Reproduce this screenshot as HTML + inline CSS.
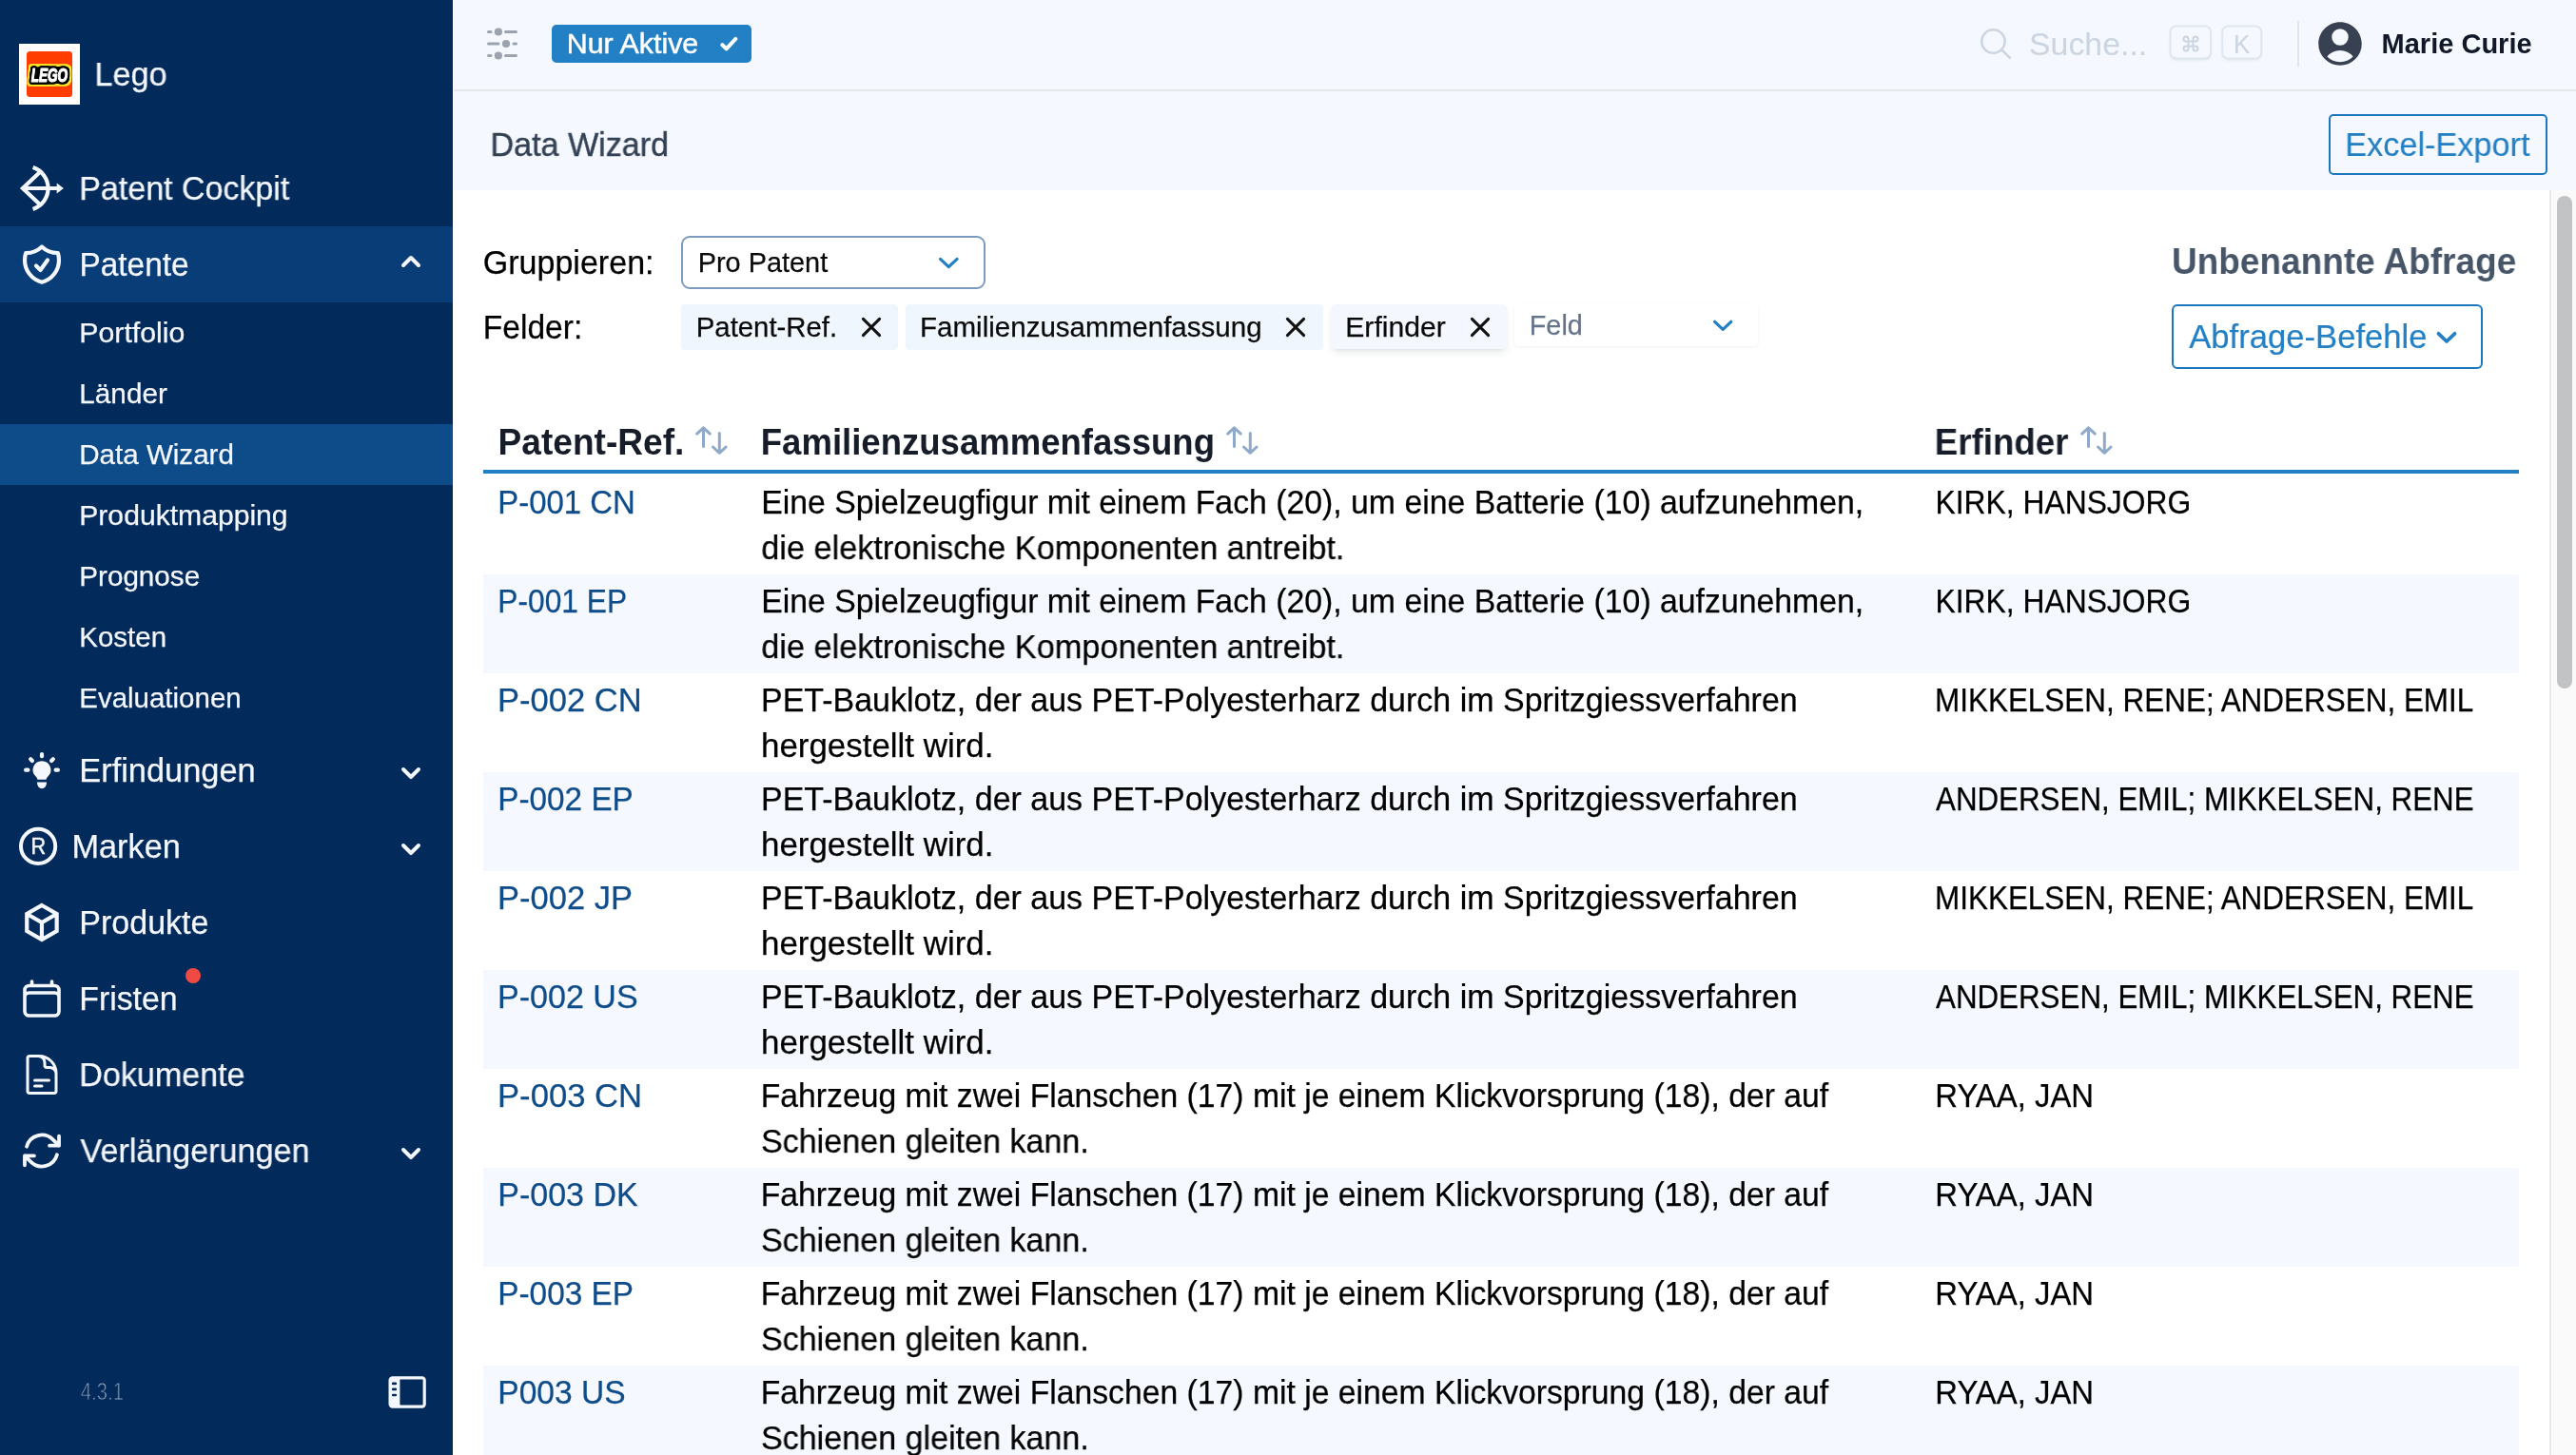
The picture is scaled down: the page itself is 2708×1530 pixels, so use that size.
<!DOCTYPE html>
<html lang="de"><head><meta charset="utf-8"><title>Data Wizard</title>
<style>
html,body{margin:0;padding:0;}
body{width:2708px;height:1530px;overflow:hidden;position:relative;background:#fff;font-family:"Liberation Sans",sans-serif;}
.abs{position:absolute;}
.tl{position:absolute;left:0;top:0;will-change:transform;}
.t{position:absolute;white-space:pre;transform-origin:0 0;font-family:"Liberation Sans",sans-serif;font-kerning:normal;}
svg{overflow:visible;}
</style></head><body>
<nav aria-label="Hauptnavigation">
<div class="abs" style="left:0;top:0;width:476px;height:1530px;background:#022a5a"></div>
<div class="abs" style="left:0;top:238px;width:476px;height:80px;background:#093d78"></div>
<div class="abs" style="left:0;top:446px;width:476px;height:64px;background:#0e4c89"></div>
<div class="abs" style="left:20px;top:46px;width:64px;height:64px;background:#fdfdfd"></div>
<svg class="abs" style="left:28px;top:54px" width="48" height="48" viewBox="0 0 48 48">
<defs><filter id="lg" x="-20%" y="-50%" width="140%" height="200%" color-interpolation-filters="sRGB">
<feMorphology in="SourceAlpha" operator="dilate" radius="2" result="d1"/><feGaussianBlur in="d1" stdDeviation="0.9" result="b1"/>
<feComponentTransfer in="b1" result="t1"><feFuncA type="linear" slope="6" intercept="-2.2"/></feComponentTransfer>
<feFlood flood-color="#000"/><feComposite in2="t1" operator="in" result="black"/>
<feMorphology in="SourceAlpha" operator="dilate" radius="4" result="d2"/><feGaussianBlur in="d2" stdDeviation="0.9" result="b2"/>
<feComponentTransfer in="b2" result="t2"><feFuncA type="linear" slope="6" intercept="-2.2"/></feComponentTransfer>
<feFlood flood-color="#ffe42a"/><feComposite in2="t2" operator="in" result="yellow"/>
<feMerge><feMergeNode in="yellow"/><feMergeNode in="black"/><feMergeNode in="SourceGraphic"/></feMerge></filter></defs>
<rect x="0" y="0" width="48" height="48" rx="3.5" fill="#ff3d00"/>
<clipPath id="lc"><rect x="0" y="0" width="48" height="48" rx="3.5"/></clipPath><g clip-path="url(#lc)"><g filter="url(#lg)"><text font-family="Liberation Sans" font-weight="bold" font-style="italic" font-size="20.500" text-anchor="middle" x="23.900" y="31.500" fill="#fff" stroke="#fff" stroke-width="1.200" stroke-linejoin="round" textLength="38.5" lengthAdjust="spacingAndGlyphs">LEGO</text></g></g>
</svg>

<svg class="abs" style="left:16px;top:170px" width="56" height="56" viewBox="16 170 56 56" fill="none" stroke="#f4f7fd" stroke-width="4.2" stroke-linecap="butt" stroke-linejoin="miter">
<path d="M34.6 176.1 A23 23 0 0 1 34.6 219.900"/>
<path d="M43 180 L23.9 198 L43 216"/>
<path d="M23.8 198 H61"/>
<path d="M59.7 192.600 L66.9 198 L59.7 203.400 Z" fill="#f4f7fd" stroke="none"/>
</svg>

<svg class="abs" style="left:20px;top:254px" width="48" height="48" viewBox="0 0 24 24" fill="none" stroke="#f4f7fd" stroke-width="2.1" stroke-linecap="round" stroke-linejoin="round"><path d="M9 12.750 11.250 15 15 9.750m-3-7.036A11.959 11.959 0 0 1 3.598 6 11.990 11.990 0 0 0 3 9.749c0 5.592 3.824 10.290 9 11.623 5.176-1.332 9-6.030 9-11.622 0-1.310-.210-2.571-.598-3.751h-.152c-3.196 0-6.100-1.248-8.250-3.285Z"/></svg>

<svg class="abs" style="left:416px;top:262px" width="32" height="26" viewBox="416 262 32 26" fill="none" stroke="#f4f7fd" stroke-width="4" stroke-linecap="round" stroke-linejoin="round"><path d="M424 279 L432 271 L440 279"/></svg>







<svg class="abs" style="left:20px;top:786px" width="48" height="48" viewBox="20 786 48 48" fill="#f4f7fd" stroke="none">
<path d="M44 800.2 a9.4 9.4 0 0 1 6.200 16.500 c-1.100 1 -1.500 2 -1.600 3.100 h-9.200 c-.1 -1.100 -.5 -2.100 -1.600 -3.100 a9.400 9.400 0 0 1 6.200 -16.500z"/>
<path d="M38.900 822.400 h10.200 a5.100 5.100 0 0 1 -10.200 0z" transform="translate(0,0) scale(1,1.350) translate(0,-213.200)"/>
<g stroke="#f4f7fd" stroke-width="4.2" stroke-linecap="round" fill="none">
<path d="M44 793 v2.300"/><path d="M27.100 809.700 h2.300"/><path d="M58.600 809.700 h2.300"/>
<path d="M32.200 798.200 l1.700 1.700"/><path d="M55.800 798.200 l-1.700 1.700"/>
</g></svg>

<svg class="abs" style="left:416px;top:800px" width="32" height="26" viewBox="416 800 32 26" fill="none" stroke="#f4f7fd" stroke-width="4" stroke-linecap="round" stroke-linejoin="round"><path d="M424 809 L432 817 L440 809"/></svg>
<svg class="abs" style="left:18px;top:868px" width="44" height="44" viewBox="18 868 44 44" fill="none" stroke="#f4f7fd" stroke-width="4"><circle cx="40.1" cy="889.900" r="18.100"/></svg>


<svg class="abs" style="left:416px;top:880px" width="32" height="26" viewBox="416 880 32 26" fill="none" stroke="#f4f7fd" stroke-width="4" stroke-linecap="round" stroke-linejoin="round"><path d="M424 889 L432 897 L440 889"/></svg>
<svg class="abs" style="left:20px;top:946px" width="48" height="48" viewBox="20 946 48 48" fill="none" stroke="#f4f7fd" stroke-width="4.2" stroke-linejoin="miter" stroke-linecap="butt"><path d="M43.95 951.95 L59.65 961 V979.1 L43.95 988.15 L28.25 979.1 V961 Z M28.25 961 L43.95 970.05 L59.65 961 M43.95 970.05 V988.15"/></svg>

<svg class="abs" style="left:20px;top:1026px" width="48" height="48" viewBox="0 0 24 24" fill="none" stroke="#f4f7fd" stroke-width="1.8" stroke-linecap="round" stroke-linejoin="round"><path d="M6.750 3v2.250M17.250 3v2.250M3 18.750V7.500a2.250 2.250 0 0 1 2.250-2.250h13.500A2.250 2.250 0 0 1 21 7.500v11.250m-18 0A2.250 2.250 0 0 0 5.250 21h13.500A2.250 2.250 0 0 0 21 18.750m-18 0v-7.500A2.250 2.250 0 0 1 5.250 9h13.500A2.250 2.250 0 0 1 21 11.250v7.500"/></svg>

<div class="abs" style="left:195px;top:1018px;width:16px;height:16px;border-radius:8px;background:#ef4a44"></div>
<svg class="abs" style="left:20px;top:1106px" width="48" height="48" viewBox="0 0 24 24" fill="none" stroke="#f4f7fd" stroke-width="1.5" stroke-linecap="round" stroke-linejoin="round"><path d="M19.500 14.250v-2.625a3.375 3.375 0 0 0-3.375-3.375h-1.500A1.125 1.125 0 0 1 13.500 7.125v-1.500a3.375 3.375 0 0 0-3.375-3.375H8.250m0 12.750h7.500m-7.500 3H12M10.500 2.250H5.625c-.621 0-1.125.504-1.125 1.125v17.250c0 .621.504 1.125 1.125 1.125h12.750c.621 0 1.125-.504 1.125-1.125V11.250a9 9 0 0 0-9-9Z"/></svg>

<svg class="abs" style="left:20px;top:1186px" width="48" height="48" viewBox="0 0 24 24" fill="none" stroke="#f4f7fd" stroke-width="1.9" stroke-linecap="round" stroke-linejoin="round"><path d="M16.023 9.348h4.992v-.001M2.985 19.644v-4.992m0 0h4.992m-4.993 0 3.181 3.183a8.250 8.250 0 0 0 13.803-3.700M4.031 9.865a8.250 8.250 0 0 1 13.803-3.700l3.181 3.182m0-4.991v4.990"/></svg>

<svg class="abs" style="left:416px;top:1200px" width="32" height="26" viewBox="416 1200 32 26" fill="none" stroke="#f4f7fd" stroke-width="4" stroke-linecap="round" stroke-linejoin="round"><path d="M424 1209 L432 1217 L440 1209"/></svg>

<svg class="abs" style="left:406px;top:1444px" width="44" height="40" viewBox="406 1444 44 40">
<rect x="408.5" y="1447.2" width="39.3" height="33.500" rx="4.200" fill="#f4f7fd"/>
<rect x="420.4" y="1450.4" width="24.200" height="27.100" rx="0.800" fill="#022a5a"/>
<g stroke="#022a5a" stroke-width="2.700" stroke-linecap="round"><path d="M413.200 1454.900h2.600"/><path d="M413.200 1460.900h2.600"/><path d="M413.200 1467h2.600"/></g>
</svg>
<div class="tl"><span class="t" style="left:99px;top:57px;font-size:34.6px;line-height:43px;color:#f4f7fd;transform:translateX(0.50px) scaleX(0.9878);-webkit-text-stroke:0.25px #f4f7fd;">Lego</span>
<span class="t" style="left:83px;top:177px;font-size:34.6px;line-height:43px;color:#f4f7fd;transform:translateX(0.25px) scaleX(0.9833);-webkit-text-stroke:0.25px #f4f7fd;">Patent Cockpit</span>
<span class="t" style="left:83px;top:257px;font-size:34.6px;line-height:43px;color:#f4f7fd;transform:translateX(0.50px) scaleX(0.9656);-webkit-text-stroke:0.25px #f4f7fd;">Patente</span>
<span class="t" style="left:83px;top:331px;font-size:30.2px;line-height:38px;color:#f4f7fd;transform:translateX(0.25px) scaleX(1.0036);-webkit-text-stroke:0.25px #f4f7fd;">Portfolio</span>
<span class="t" style="left:83px;top:395px;font-size:30.2px;line-height:38px;color:#f4f7fd;transform:translateX(0.25px) scaleX(0.9856);-webkit-text-stroke:0.25px #f4f7fd;">Länder</span>
<span class="t" style="left:83px;top:459px;font-size:30.2px;line-height:38px;color:#f4f7fd;transform:translateX(0.25px) scaleX(0.9791);-webkit-text-stroke:0.25px #f4f7fd;">Data Wizard</span>
<span class="t" style="left:83px;top:523px;font-size:30.2px;line-height:38px;color:#f4f7fd;transform:translateX(0.25px) scaleX(0.9979);-webkit-text-stroke:0.25px #f4f7fd;">Produktmapping</span>
<span class="t" style="left:83px;top:587px;font-size:30.2px;line-height:38px;color:#f4f7fd;transform:translateX(0.25px) scaleX(0.9821);-webkit-text-stroke:0.25px #f4f7fd;">Prognose</span>
<span class="t" style="left:83px;top:651px;font-size:30.2px;line-height:38px;color:#f4f7fd;transform:translateX(0.25px) scaleX(0.9769);-webkit-text-stroke:0.25px #f4f7fd;">Kosten</span>
<span class="t" style="left:83px;top:715px;font-size:30.2px;line-height:38px;color:#f4f7fd;transform:translateX(0.25px) scaleX(0.9763);-webkit-text-stroke:0.25px #f4f7fd;">Evaluationen</span>
<span class="t" style="left:83px;top:789px;font-size:34.6px;line-height:43px;color:#f4f7fd;transform:translateX(0.25px) scaleX(0.9943);-webkit-text-stroke:0.25px #f4f7fd;">Erfindungen</span>
<span class="t" style="left:32px;top:874px;font-size:24.8px;line-height:31px;color:#f4f7fd;transform:translateX(0.50px) scaleX(0.8700);-webkit-text-stroke:0.5px #f4f7fd;">R</span>
<span class="t" style="left:75px;top:869px;font-size:34.6px;line-height:43px;color:#f4f7fd;transform:translateX(0.50px) scaleX(0.9910);-webkit-text-stroke:0.25px #f4f7fd;">Marken</span>
<span class="t" style="left:83px;top:949px;font-size:34.6px;line-height:43px;color:#f4f7fd;transform:translateX(0.25px) scaleX(0.9843);-webkit-text-stroke:0.25px #f4f7fd;">Produkte</span>
<span class="t" style="left:83px;top:1029px;font-size:34.6px;line-height:43px;color:#f4f7fd;transform:translateX(0.25px) scaleX(0.9773);-webkit-text-stroke:0.25px #f4f7fd;">Fristen</span>
<span class="t" style="left:83px;top:1109px;font-size:34.6px;line-height:43px;color:#f4f7fd;transform:translateX(0.25px) scaleX(0.9857);-webkit-text-stroke:0.25px #f4f7fd;">Dokumente</span>
<span class="t" style="left:84px;top:1189px;font-size:34.6px;line-height:43px;color:#f4f7fd;transform:translateX(0.50px) scaleX(0.9869);-webkit-text-stroke:0.25px #f4f7fd;">Verlängerungen</span>
<span class="t" style="left:84px;top:1447px;font-size:25.5px;line-height:32px;color:#9aaac2;transform:translateX(0.75px) scaleX(0.7968);-webkit-text-stroke:0.9px #022a5a;">4.3.1</span></div>
</nav>
<header>
<div class="abs" style="left:476px;top:0;width:2232px;height:200px;background:#f5f8fe"></div>
<div class="abs" style="left:477px;top:94px;width:2231px;height:2px;background:#e4e6ea"></div>
<div class="abs" style="left:476px;top:0;width:1px;height:200px;background:#fff"></div>
<svg class="abs" style="left:508px;top:24px" width="40" height="44" viewBox="508 24 40 44" fill="#9ca3af" stroke="#9ca3af" stroke-width="3" stroke-linecap="round">
<path d="M513.500 33.500h2.500M531.500 33.500h11M513.500 46h10.500M540 46h2.500M513.500 58.500h2.500M531.500 58.500h11"/>
<g stroke="none"><circle cx="523.900" cy="33.500" r="4.100"/><circle cx="532" cy="46" r="4.100"/><circle cx="523.900" cy="58.500" r="4.100"/></g></svg>
<div class="abs" style="left:580px;top:26px;width:210px;height:40px;border-radius:5px;background:#2380c4"></div>

<svg class="abs" style="left:752px;top:34px" width="28" height="24" viewBox="752 34 28 24" fill="none" stroke="#fff" stroke-width="4" stroke-linecap="round" stroke-linejoin="round"><path d="M759.400 47.200 L763.600 51.300 L773.300 40.900"/></svg>
<svg class="abs" style="left:2078px;top:26px" width="40" height="40" viewBox="2078 26 40 40" fill="none" stroke="#cbd5e1" stroke-width="2.500" stroke-linecap="round"><circle cx="2095.400" cy="43.500" r="12.200"/><path d="M2104.300 52.300 L2112.900 60.800"/></svg>

<svg class="abs" style="left:2270px;top:20px" width="120" height="54" viewBox="2270 20 120 54"><defs><filter id="ks2280" x="-20%" y="-20%" width="140%" height="160%"><feGaussianBlur stdDeviation="1.5"/></filter></defs><rect x="2281.5" y="29.5" width="42.5" height="34" rx="6" fill="#64748b" opacity="0.13" filter="url(#ks2280)"/><rect x="2281.5" y="27.5" width="42.5" height="34" rx="6" fill="#f5f8fe" stroke="#e0e6ee" stroke-width="2"/></svg>
<svg class="abs" style="left:2270px;top:20px" width="120" height="54" viewBox="2270 20 120 54"><defs><filter id="ks2335" x="-20%" y="-20%" width="140%" height="160%"><feGaussianBlur stdDeviation="1.5"/></filter></defs><rect x="2336.2" y="29.5" width="41.0" height="34" rx="6" fill="#64748b" opacity="0.13" filter="url(#ks2335)"/><rect x="2336.2" y="27.5" width="41.0" height="34" rx="6" fill="#f5f8fe" stroke="#e0e6ee" stroke-width="2"/></svg>
<svg class="abs" style="left:2292.500px;top:35.700px" width="20" height="20" viewBox="0 0 24 24" fill="none" stroke="#cbd5e1" stroke-width="2.400" stroke-linecap="round" stroke-linejoin="round"><path d="M18 3a3 3 0 0 0-3 3v12a3 3 0 0 0 3 3 3 3 0 0 0 3-3 3 3 0 0 0-3-3H6a3 3 0 0 0-3 3 3 3 0 0 0 3 3 3 3 0 0 0 3-3V6a3 3 0 0 0-3-3 3 3 0 0 0-3 3 3 3 0 0 0 3 3h12a3 3 0 0 0 3-3 3 3 0 0 0-3-3z"/></svg>

<div class="abs" style="left:2415px;top:22px;width:2px;height:48px;background:#e3e7ed"></div>
<svg class="abs" style="left:2432px;top:18px" width="56" height="56" viewBox="0 0 24 24" fill="#374151"><path fill-rule="evenodd" clip-rule="evenodd" d="M18.685 19.097A9.723 9.723 0 0 0 21.750 12c0-5.385-4.365-9.750-9.750-9.750S2.250 6.615 2.250 12a9.723 9.723 0 0 0 3.065 7.097A9.716 9.716 0 0 0 12 21.750a9.716 9.716 0 0 0 6.685-2.653Zm-12.540-1.285A7.486 7.486 0 0 1 12 15a7.486 7.486 0 0 1 5.855 2.812A8.224 8.224 0 0 1 12 20.250a8.224 8.224 0 0 1-5.855-2.438ZM15.750 9a3.750 3.750 0 1 1-7.500 0 3.750 3.750 0 0 1 7.500 0Z"/></svg>


<div class="abs" style="left:2448px;top:120px;width:230px;height:64px;border-radius:5px;border:2px solid #1d77bd;box-sizing:border-box"></div>

<div class="tl"><span class="t" style="left:595px;top:27px;font-size:29.6px;line-height:37px;color:#fff;transform:translateX(0.75px) scaleX(1.0268);-webkit-text-stroke:0.45px #fff;">Nur Aktive</span>
<span class="t" style="left:2133px;top:25px;font-size:33.8px;line-height:42px;color:#cbd5e1;transform:translateX(0.00px) scaleX(1.0016);-webkit-text-stroke:0.1px #cbd5e1;">Suche...</span>
<span class="t" style="left:2347px;top:29px;font-size:27.9px;line-height:35px;color:#cbd5e1;transform:translateX(1.00px) scaleX(0.9356);-webkit-text-stroke:0.1px #cbd5e1;">K</span>
<span class="t" style="left:2503px;top:27px;font-size:29.6px;line-height:37px;color:#111827;transform:translateX(0.50px) scaleX(0.9811);font-weight:700;">Marie Curie</span>
<span class="t" style="left:515px;top:131px;font-size:34.6px;line-height:43px;color:#334155;transform:translateX(0.50px) scaleX(0.9859);-webkit-text-stroke:0.4px #334155;">Data Wizard</span>
<span class="t" style="left:2465px;top:131px;font-size:34.5px;line-height:43px;color:#2380c4;transform:translateX(0.25px) scaleX(0.9935);-webkit-text-stroke:0.15px #2380c4;">Excel-Export</span></div>
</header>
<main>
<div class="abs" style="left:476px;top:200px;width:2204px;height:1330px;background:#fff"></div>
<div class="abs" style="left:2680px;top:200px;width:28px;height:1330px;background:#fafafa;border-left:2px solid #e8e9ed;box-sizing:border-box"></div>
<div class="abs" style="left:2688px;top:206px;width:16px;height:518px;border-radius:8px;background:#c2c3c5"></div>

<div class="abs" style="left:716px;top:248px;width:320px;height:56px;border-radius:9px;border:2px solid #7b9abf;box-sizing:border-box;background:#fff"></div>

<svg class="abs" style="left:980px;top:262px" width="34" height="28" viewBox="980 262 34 28" fill="none" stroke="#2380c4" stroke-width="3.200" stroke-linecap="round" stroke-linejoin="round"><path d="M988.500 272.400 L997.300 280.600 L1006.100 272.400"/></svg>

<div class="abs" style="left:716px;top:320px;width:228px;height:48px;border-radius:4px;background:#f0f6fe"></div>

<svg class="abs" style="left:902px;top:330px" width="28" height="28" viewBox="902 330 28 28" fill="none" stroke="#111" stroke-width="3" stroke-linecap="round"><path d="M907.4 335.4 L924.6 352.6 M924.6 335.4 L907.4 352.6"/></svg>
<div class="abs" style="left:952px;top:320px;width:439px;height:48px;border-radius:4px;background:#f0f6fe"></div>

<svg class="abs" style="left:1348px;top:330px" width="28" height="28" viewBox="1348 330 28 28" fill="none" stroke="#111" stroke-width="3" stroke-linecap="round"><path d="M1353.4 335.4 L1370.6 352.6 M1370.6 335.4 L1353.4 352.6"/></svg>
<div class="abs" style="left:1399px;top:320px;width:185px;height:47px;border-radius:5px;background:#f4f7fd;box-shadow:0 5px 9px -2px rgba(30,41,59,0.11),0 2px 4px -2px rgba(30,41,59,0.08)"></div>

<svg class="abs" style="left:1542px;top:330px" width="28" height="28" viewBox="1542 330 28 28" fill="none" stroke="#111" stroke-width="3" stroke-linecap="round"><path d="M1547.4 335.4 L1564.6 352.6 M1564.6 335.4 L1547.4 352.6"/></svg>
<div class="abs" style="left:1592px;top:320px;width:256px;height:44px;border-radius:4px;background:#fff;box-shadow:0 1px 3px rgba(100,116,139,0.10)"></div>

<svg class="abs" style="left:1794px;top:328px" width="34" height="28" viewBox="1794 328 34 28" fill="none" stroke="#2380c4" stroke-width="3.200" stroke-linecap="round" stroke-linejoin="round"><path d="M1802.600 338.300 L1811.200 346.300 L1819.800 338.300"/></svg>

<div class="abs" style="left:2283px;top:320px;width:327px;height:68px;border-radius:6px;border:2px solid #1d77bd;box-sizing:border-box"></div>

<svg class="abs" style="left:2556px;top:340px" width="34" height="30" viewBox="2556 340 34 30" fill="none" stroke="#2380c4" stroke-width="3.800" stroke-linecap="round" stroke-linejoin="round"><path d="M2563.500 350.800 L2572 359 L2580.500 350.800"/></svg>

<svg class="abs" style="left:727.2px;top:444px" width="44" height="40" viewBox="727.2 444 44 40" fill="none" stroke="#8fa9c9" stroke-width="3" stroke-linecap="round" stroke-linejoin="round"><path d="M739.7 469.400 V449.800 M732.9000000000001 456.100 L739.7 449.800 L746.5 456.100 M756.5 455.500 V476.300 M749.7 470 L756.5 476.300 L763.3 470"/></svg>

<svg class="abs" style="left:1285.1px;top:444px" width="44" height="40" viewBox="1285.1 444 44 40" fill="none" stroke="#8fa9c9" stroke-width="3" stroke-linecap="round" stroke-linejoin="round"><path d="M1297.6 469.400 V449.800 M1290.8 456.100 L1297.6 449.800 L1304.3999999999999 456.100 M1314.3999999999999 455.500 V476.300 M1307.6 470 L1314.3999999999999 476.300 L1321.1999999999998 470"/></svg>

<svg class="abs" style="left:2183.3px;top:444px" width="44" height="40" viewBox="2183.3 444 44 40" fill="none" stroke="#8fa9c9" stroke-width="3" stroke-linecap="round" stroke-linejoin="round"><path d="M2195.8 469.400 V449.800 M2189.0 456.100 L2195.8 449.800 L2202.6000000000004 456.100 M2212.6000000000004 455.500 V476.300 M2205.8 470 L2212.6000000000004 476.300 L2219.4000000000005 470"/></svg>
<div class="abs" style="left:508px;top:494px;width:2140px;height:4px;background:#2380c4"></div>




<div class="abs" style="left:508px;top:604px;width:2140px;height:104px;background:#f5f8fe"></div>








<div class="abs" style="left:508px;top:812px;width:2140px;height:104px;background:#f5f8fe"></div>








<div class="abs" style="left:508px;top:1020px;width:2140px;height:104px;background:#f5f8fe"></div>








<div class="abs" style="left:508px;top:1228px;width:2140px;height:104px;background:#f5f8fe"></div>








<div class="abs" style="left:508px;top:1436px;width:2140px;height:104px;background:#f5f8fe"></div>




<div class="tl"><span class="t" style="left:507px;top:255px;font-size:34.6px;line-height:43px;color:#000;transform:translateX(0.75px) scaleX(0.9846);-webkit-text-stroke:0.25px #000;">Gruppieren:</span>
<span class="t" style="left:733px;top:257px;font-size:30.2px;line-height:38px;color:#0a0a0a;transform:translateX(0.75px) scaleX(0.9565);-webkit-text-stroke:0.25px #0a0a0a;">Pro Patent</span>
<span class="t" style="left:507px;top:323px;font-size:34.6px;line-height:43px;color:#000;transform:translateX(0.75px) scaleX(0.9709);-webkit-text-stroke:0.25px #000;">Felder:</span>
<span class="t" style="left:731px;top:325px;font-size:30.2px;line-height:38px;color:#0a0a0a;transform:translateX(0.75px) scaleX(0.9720);-webkit-text-stroke:0.25px #0a0a0a;">Patent-Ref.</span>
<span class="t" style="left:967px;top:325px;font-size:30.2px;line-height:38px;color:#0a0a0a;transform:translateX(0.00px) scaleX(0.9787);-webkit-text-stroke:0.25px #0a0a0a;">Familienzusammenfassung</span>
<span class="t" style="left:1414px;top:325px;font-size:30.2px;line-height:38px;color:#0a0a0a;transform:translateX(0.25px) scaleX(0.9984);-webkit-text-stroke:0.25px #0a0a0a;">Erfinder</span>
<span class="t" style="left:1607px;top:323px;font-size:30.2px;line-height:38px;color:#64748b;transform:translateX(0.75px) scaleX(0.9551);-webkit-text-stroke:0.25px #64748b;">Feld</span>
<span class="t" style="left:2282px;top:251px;font-size:38.5px;line-height:48px;color:#475569;transform:translateX(1.00px) scaleX(0.9605);font-weight:700;">Unbenannte Abfrage</span>
<span class="t" style="left:2301px;top:333px;font-size:34.6px;line-height:43px;color:#2380c4;transform:translateX(0.25px) scaleX(1.0015);-webkit-text-stroke:0.2px #2380c4;">Abfrage-Befehle</span>
<span class="t" style="left:523px;top:441px;font-size:38.5px;line-height:48px;color:#161c28;transform:translateX(0.50px) scaleX(0.9639);font-weight:700;">Patent-Ref.</span>
<span class="t" style="left:799px;top:441px;font-size:38.5px;line-height:48px;color:#161c28;transform:translateX(0.75px) scaleX(0.9492);font-weight:700;">Familienzusammenfassung</span>
<span class="t" style="left:2033px;top:441px;font-size:38.5px;line-height:48px;color:#161c28;transform:translateX(0.75px) scaleX(0.9525);font-weight:700;">Erfinder</span>
<span class="t" style="left:523px;top:507px;font-size:34.6px;line-height:43px;color:#0f4c8a;transform:translateX(0.25px) scaleX(0.9521);-webkit-text-stroke:0.25px #0f4c8a;">P-001 CN</span>
<span class="t" style="left:800px;top:507px;font-size:34.6px;line-height:43px;color:#000;transform:translateX(0.25px) scaleX(0.9773);-webkit-text-stroke:0.25px #000;">Eine Spielzeugfigur mit einem Fach (20), um eine Batterie (10) aufzunehmen,</span>
<span class="t" style="left:800px;top:555px;font-size:34.6px;line-height:43px;color:#000;transform:translateX(0.25px) scaleX(0.9907);-webkit-text-stroke:0.25px #000;">die elektronische Komponenten antreibt.</span>
<span class="t" style="left:2034px;top:507px;font-size:34.6px;line-height:43px;color:#000;transform:translateX(0.50px) scaleX(0.9203);-webkit-text-stroke:0.25px #000;">KIRK, HANSJORG</span>
<span class="t" style="left:523px;top:611px;font-size:34.6px;line-height:43px;color:#0f4c8a;transform:translateX(0.25px) scaleX(0.9178);-webkit-text-stroke:0.25px #0f4c8a;">P-001 EP</span>
<span class="t" style="left:800px;top:611px;font-size:34.6px;line-height:43px;color:#000;transform:translateX(0.25px) scaleX(0.9773);-webkit-text-stroke:0.25px #000;">Eine Spielzeugfigur mit einem Fach (20), um eine Batterie (10) aufzunehmen,</span>
<span class="t" style="left:800px;top:659px;font-size:34.6px;line-height:43px;color:#000;transform:translateX(0.25px) scaleX(0.9907);-webkit-text-stroke:0.25px #000;">die elektronische Komponenten antreibt.</span>
<span class="t" style="left:2034px;top:611px;font-size:34.6px;line-height:43px;color:#000;transform:translateX(0.50px) scaleX(0.9203);-webkit-text-stroke:0.25px #000;">KIRK, HANSJORG</span>
<span class="t" style="left:523px;top:715px;font-size:34.6px;line-height:43px;color:#0f4c8a;transform:translateX(0.00px) scaleX(0.9987);-webkit-text-stroke:0.25px #0f4c8a;">P-002 CN</span>
<span class="t" style="left:800px;top:715px;font-size:34.6px;line-height:43px;color:#000;transform:translateX(0.00px) scaleX(0.9827);-webkit-text-stroke:0.25px #000;">PET-Bauklotz, der aus PET-Polyesterharz durch im Spritzgiessverfahren</span>
<span class="t" style="left:800px;top:763px;font-size:34.6px;line-height:43px;color:#000;transform:translateX(0.00px) scaleX(1.0094);-webkit-text-stroke:0.25px #000;">hergestellt wird.</span>
<span class="t" style="left:2034px;top:715px;font-size:34.6px;line-height:43px;color:#000;transform:translateX(0.00px) scaleX(0.9096);-webkit-text-stroke:0.25px #000;">MIKKELSEN, RENE; ANDERSEN, EMIL</span>
<span class="t" style="left:523px;top:819px;font-size:34.6px;line-height:43px;color:#0f4c8a;transform:translateX(0.25px) scaleX(0.9632);-webkit-text-stroke:0.25px #0f4c8a;">P-002 EP</span>
<span class="t" style="left:800px;top:819px;font-size:34.6px;line-height:43px;color:#000;transform:translateX(0.00px) scaleX(0.9827);-webkit-text-stroke:0.25px #000;">PET-Bauklotz, der aus PET-Polyesterharz durch im Spritzgiessverfahren</span>
<span class="t" style="left:800px;top:867px;font-size:34.6px;line-height:43px;color:#000;transform:translateX(0.00px) scaleX(1.0094);-webkit-text-stroke:0.25px #000;">hergestellt wird.</span>
<span class="t" style="left:2034px;top:819px;font-size:34.6px;line-height:43px;color:#000;transform:translateX(1.00px) scaleX(0.9056);-webkit-text-stroke:0.25px #000;">ANDERSEN, EMIL; MIKKELSEN, RENE</span>
<span class="t" style="left:523px;top:923px;font-size:34.6px;line-height:43px;color:#0f4c8a;transform:translateX(0.00px) scaleX(0.9984);-webkit-text-stroke:0.25px #0f4c8a;">P-002 JP</span>
<span class="t" style="left:800px;top:923px;font-size:34.6px;line-height:43px;color:#000;transform:translateX(0.00px) scaleX(0.9827);-webkit-text-stroke:0.25px #000;">PET-Bauklotz, der aus PET-Polyesterharz durch im Spritzgiessverfahren</span>
<span class="t" style="left:800px;top:971px;font-size:34.6px;line-height:43px;color:#000;transform:translateX(0.00px) scaleX(1.0094);-webkit-text-stroke:0.25px #000;">hergestellt wird.</span>
<span class="t" style="left:2034px;top:923px;font-size:34.6px;line-height:43px;color:#000;transform:translateX(0.00px) scaleX(0.9096);-webkit-text-stroke:0.25px #000;">MIKKELSEN, RENE; ANDERSEN, EMIL</span>
<span class="t" style="left:523px;top:1027px;font-size:34.6px;line-height:43px;color:#0f4c8a;transform:translateX(0.00px) scaleX(0.9851);-webkit-text-stroke:0.25px #0f4c8a;">P-002 US</span>
<span class="t" style="left:800px;top:1027px;font-size:34.6px;line-height:43px;color:#000;transform:translateX(0.00px) scaleX(0.9827);-webkit-text-stroke:0.25px #000;">PET-Bauklotz, der aus PET-Polyesterharz durch im Spritzgiessverfahren</span>
<span class="t" style="left:800px;top:1075px;font-size:34.6px;line-height:43px;color:#000;transform:translateX(0.00px) scaleX(1.0094);-webkit-text-stroke:0.25px #000;">hergestellt wird.</span>
<span class="t" style="left:2034px;top:1027px;font-size:34.6px;line-height:43px;color:#000;transform:translateX(1.00px) scaleX(0.9056);-webkit-text-stroke:0.25px #000;">ANDERSEN, EMIL; MIKKELSEN, RENE</span>
<span class="t" style="left:523px;top:1131px;font-size:34.6px;line-height:43px;color:#0f4c8a;transform:translateX(0.00px) scaleX(1.0021);-webkit-text-stroke:0.25px #0f4c8a;">P-003 CN</span>
<span class="t" style="left:799px;top:1131px;font-size:34.6px;line-height:43px;color:#000;transform:translateX(0.75px) scaleX(0.9750);-webkit-text-stroke:0.25px #000;">Fahrzeug mit zwei Flanschen (17) mit je einem Klickvorsprung (18), der auf</span>
<span class="t" style="left:799px;top:1179px;font-size:34.6px;line-height:43px;color:#000;transform:translateX(1.00px) scaleX(0.9856);-webkit-text-stroke:0.25px #000;">Schienen gleiten kann.</span>
<span class="t" style="left:2034px;top:1131px;font-size:34.6px;line-height:43px;color:#000;transform:translateX(0.25px) scaleX(0.9503);-webkit-text-stroke:0.25px #000;">RYAA, JAN</span>
<span class="t" style="left:523px;top:1235px;font-size:34.6px;line-height:43px;color:#0f4c8a;transform:translateX(0.25px) scaleX(0.9836);-webkit-text-stroke:0.25px #0f4c8a;">P-003 DK</span>
<span class="t" style="left:799px;top:1235px;font-size:34.6px;line-height:43px;color:#000;transform:translateX(0.75px) scaleX(0.9750);-webkit-text-stroke:0.25px #000;">Fahrzeug mit zwei Flanschen (17) mit je einem Klickvorsprung (18), der auf</span>
<span class="t" style="left:799px;top:1283px;font-size:34.6px;line-height:43px;color:#000;transform:translateX(1.00px) scaleX(0.9856);-webkit-text-stroke:0.25px #000;">Schienen gleiten kann.</span>
<span class="t" style="left:2034px;top:1235px;font-size:34.6px;line-height:43px;color:#000;transform:translateX(0.25px) scaleX(0.9503);-webkit-text-stroke:0.25px #000;">RYAA, JAN</span>
<span class="t" style="left:523px;top:1339px;font-size:34.6px;line-height:43px;color:#0f4c8a;transform:translateX(0.25px) scaleX(0.9646);-webkit-text-stroke:0.25px #0f4c8a;">P-003 EP</span>
<span class="t" style="left:799px;top:1339px;font-size:34.6px;line-height:43px;color:#000;transform:translateX(0.75px) scaleX(0.9750);-webkit-text-stroke:0.25px #000;">Fahrzeug mit zwei Flanschen (17) mit je einem Klickvorsprung (18), der auf</span>
<span class="t" style="left:799px;top:1387px;font-size:34.6px;line-height:43px;color:#000;transform:translateX(1.00px) scaleX(0.9856);-webkit-text-stroke:0.25px #000;">Schienen gleiten kann.</span>
<span class="t" style="left:2034px;top:1339px;font-size:34.6px;line-height:43px;color:#000;transform:translateX(0.25px) scaleX(0.9503);-webkit-text-stroke:0.25px #000;">RYAA, JAN</span>
<span class="t" style="left:523px;top:1443px;font-size:34.6px;line-height:43px;color:#0f4c8a;transform:translateX(0.25px) scaleX(0.9705);-webkit-text-stroke:0.25px #0f4c8a;">P003 US</span>
<span class="t" style="left:799px;top:1443px;font-size:34.6px;line-height:43px;color:#000;transform:translateX(0.75px) scaleX(0.9750);-webkit-text-stroke:0.25px #000;">Fahrzeug mit zwei Flanschen (17) mit je einem Klickvorsprung (18), der auf</span>
<span class="t" style="left:799px;top:1491px;font-size:34.6px;line-height:43px;color:#000;transform:translateX(1.00px) scaleX(0.9856);-webkit-text-stroke:0.25px #000;">Schienen gleiten kann.</span>
<span class="t" style="left:2034px;top:1443px;font-size:34.6px;line-height:43px;color:#000;transform:translateX(0.25px) scaleX(0.9503);-webkit-text-stroke:0.25px #000;">RYAA, JAN</span></div>
</main>
</body></html>
